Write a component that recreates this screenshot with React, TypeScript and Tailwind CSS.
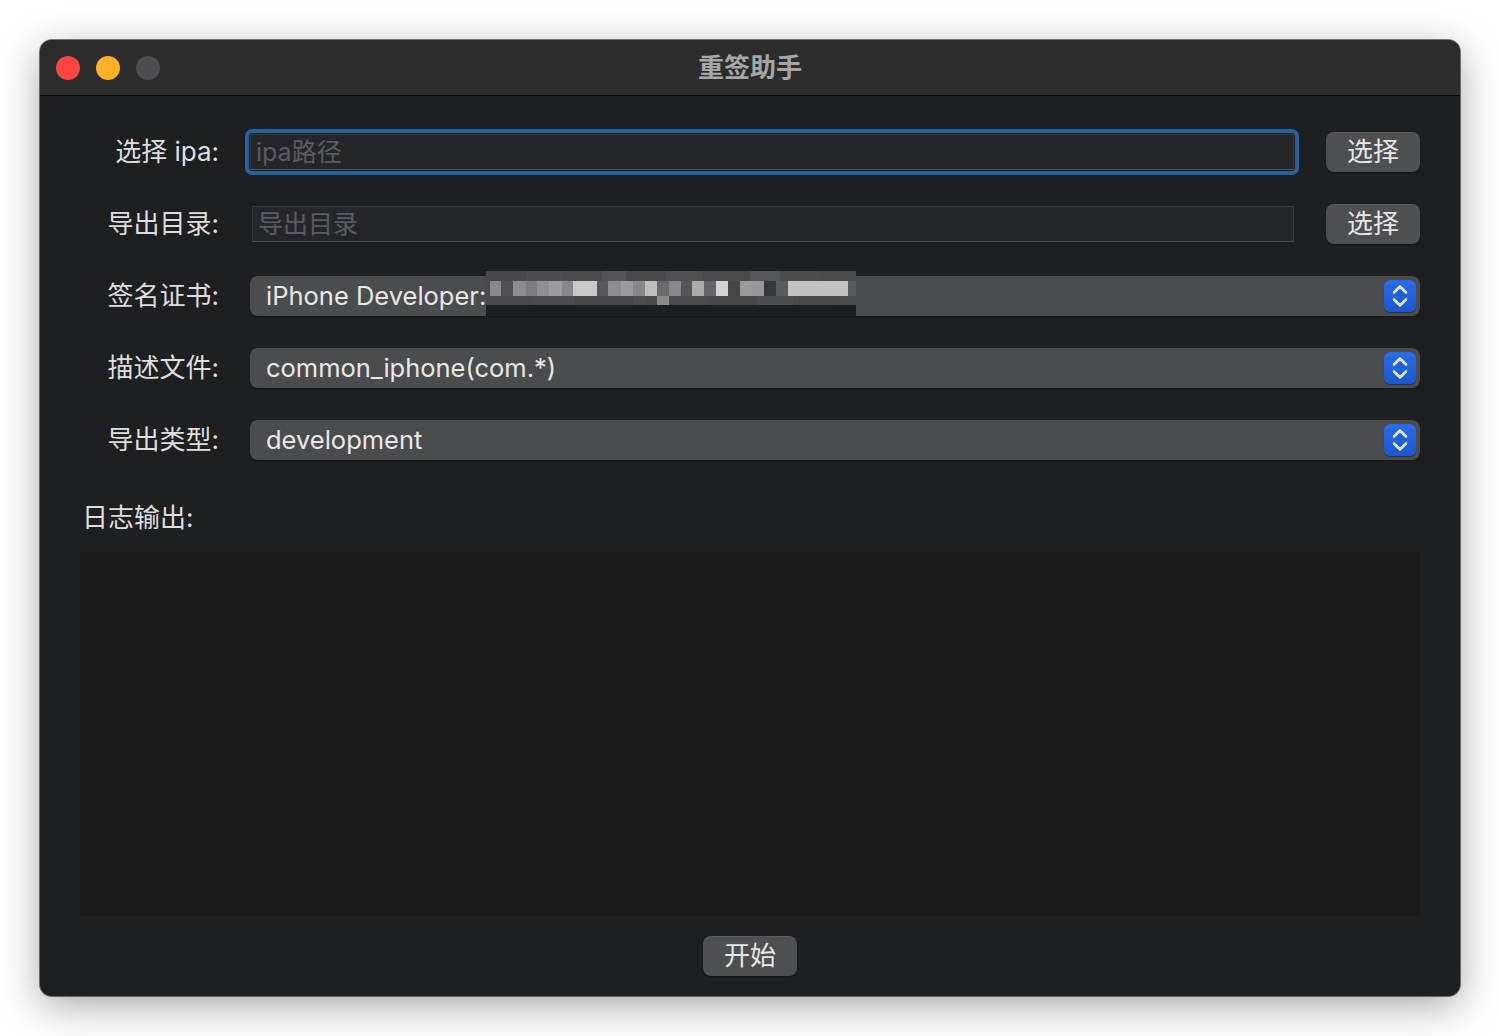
import React from "react";

const FONT = { fontFamily: 'Inter, "Noto Sans CJK SC", "Noto Sans", sans-serif' };

const blurB: [number, string][] = [
  [4, "#4a4b4d"], [11, "#8a8a8c"], [12, "#4f5052"], [13, "#8c8c8e"], [11, "#7d7d7f"],
  [12, "#8f8f91"], [13, "#9b9b9d"], [11, "#88888a"], [24, "#c9c9c9"], [11, "#56575a"],
  [13, "#8e8e90"], [12, "#9c9c9e"], [12, "#88888a"], [12, "#bdbdbd"], [12, "#6a6a6c"],
  [12, "#88888a"], [11, "#555658"], [12, "#ababab"], [12, "#646466"], [12, "#d2d2d2"],
  [12, "#454648"], [12, "#9a9a9a"], [12, "#979799"], [12, "#363739"], [12, "#58595b"],
  [60, "#c2c2c2"], [8, "#58595b"],
];
const blurA: [number, string][] = [
  [40, "#47484a"], [36, "#4d4e50"], [40, "#4a4b4d"], [24, "#535456"], [40, "#48494b"],
  [36, "#505153"], [48, "#4a4b4d"], [30, "#545557"], [40, "#4b4c4e"], [36, "#4a4b4d"],
];
const blurC: [number, string][] = [
  [48, "#48494b"], [40, "#4c4d4f"], [60, "#46474a"], [11, "#4c4d4f"], [12, "#48494b"],
  [12, "#8a8a8a"], [40, "#4a4b4d"], [48, "#46474a"], [36, "#4d4e50"], [40, "#48494b"], [23, "#4a4b4d"],
];

function Strip({ cells, h }: { cells: [number, string][]; h: string }) {
  return (
    <div className={`flex ${h}`}>
      {cells.map(([w, c], i) => (
        <div key={i} style={{ width: w, background: c }} />
      ))}
    </div>
  );
}

function Stepper() {
  return (
    <div className="w-[32px] h-[32px] rounded-[6px] bg-gradient-to-b from-[#2a6de6] to-[#1b57cc] flex items-center justify-center shadow-[0_1px_1px_rgba(0,0,0,0.4)]">
      <svg width="20" height="28" viewBox="0 0 20 28" fill="none" stroke="#e4ebff" strokeWidth="2.6" strokeLinecap="round" strokeLinejoin="round">
        <path d="M4 10.5 L10 4.5 L16 10.5" />
        <path d="M4 17.5 L10 23.5 L16 17.5" />
      </svg>
    </div>
  );
}

function Popup({ text, blur }: { text: string; blur?: boolean }) {
  return (
    <div className="relative flex-1 h-[40px] rounded-[8px] bg-[#4b4c4e] shadow-[0_1px_2px_rgba(0,0,0,0.35)] flex items-center pl-[16px] pr-[4px]">
      <span className="flex-1 text-[25.5px] text-[#e8e8e8] leading-none">{text}</span>
      <Stepper />
      {blur && (
        <div className="absolute left-[236px] top-[-5px] w-[370px] flex flex-col">
          <Strip cells={blurA} h="h-[10px]" />
          <Strip cells={blurB} h="h-[15px]" />
          <Strip cells={blurC} h="h-[9px]" />
          <div className="h-[11px] bg-[#1d1e20]" />
        </div>
      )}
    </div>
  );
}

function Button({ text }: { text: string }) {
  return (
    <div className="w-[94px] h-[40px] rounded-[8px] bg-[#4e4f51] shadow-[0_1px_2px_rgba(0,0,0,0.4),inset_0_1px_0_rgba(255,255,255,0.08)] flex items-center justify-center text-[26px] text-[#e6e6e6] leading-none">
      {text}
    </div>
  );
}

function Label({ text }: { text: string }) {
  return (
    <div className="w-[139px] shrink-0 text-right text-[26px] text-[#dedede] leading-none">{text}</div>
  );
}

export default function App() {
  return (
    <div className="w-[1500px] h-[1036px] bg-white flex items-start justify-start pt-[40px] pl-[40px]" style={FONT}>
      <div className="w-[1420px] h-[956px] rounded-[12px] overflow-hidden flex flex-col bg-[#1e1f21] shadow-[0_10px_40px_rgba(0,0,0,0.35),0_0_0_1px_rgba(0,0,0,0.5)]">
        {/* title bar */}
        <div className="relative h-[56px] bg-[#2c2c2d] border-b border-[#0a0a0a] flex items-center shrink-0">
          <div className="flex gap-[16px] pl-[16px]">
            <div className="w-[24px] h-[24px] rounded-full bg-[#fd4545]" />
            <div className="w-[24px] h-[24px] rounded-full bg-[#fdb226]" />
            <div className="w-[24px] h-[24px] rounded-full bg-[#4e4e50]" />
          </div>
          <div className="absolute inset-0 flex items-center justify-center text-[26px] font-bold text-[#a6a6a6] pointer-events-none">
            重签助手
          </div>
        </div>

        {/* body */}
        <div className="flex-1 flex flex-col px-[40px] pt-[36px] pb-[20px]">
          <div className="flex flex-col gap-[32px]">
            <div className="flex items-center h-[40px]">
              <Label text="选择 ipa:" />
              <div className="flex-1 ml-[31px] mr-[32px] h-[36px] relative">
                <div className="absolute -inset-[5px] rounded-[7px] border-[4px] border-[#2563a0]" />
                <div className="h-full bg-[#25262a] border border-[#38393c] border-b-[#55565a] flex items-center pl-[5px] text-[25px] text-[#5b5c5f] leading-none">
                  ipa路径
                </div>
              </div>
              <Button text="选择" />
            </div>
            <div className="flex items-center h-[40px]">
              <Label text="导出目录:" />
              <div className="flex-1 ml-[33px] mr-[32px] h-[36px] bg-[#25262a] border border-[#38393c] border-b-[#4a4b4e] flex items-center pl-[5px] text-[25px] text-[#5b5c5f] leading-none">
                导出目录
              </div>
              <Button text="选择" />
            </div>
            <div className="flex items-center h-[40px]">
              <Label text="签名证书:" />
              <div className="flex-1 ml-[31px] flex">
                <Popup text="iPhone Developer:" blur />
              </div>
            </div>
            <div className="flex items-center h-[40px]">
              <Label text="描述文件:" />
              <div className="flex-1 ml-[31px] flex">
                <Popup text="common_iphone(com.*)" />
              </div>
            </div>
            <div className="flex items-center h-[40px]">
              <Label text="导出类型:" />
              <div className="flex-1 ml-[31px] flex">
                <Popup text="development" />
              </div>
            </div>
          </div>

          <div className="mt-[40px] h-[36px] flex items-center pl-[2px] text-[26px] text-[#dedede] leading-none">日志输出:</div>
          <div className="mt-[16px] h-[364px] bg-[#19191a]" />
          <div className="mt-[20px] flex justify-center">
            <Button text="开始" />
          </div>
        </div>
      </div>
    </div>
  );
}
